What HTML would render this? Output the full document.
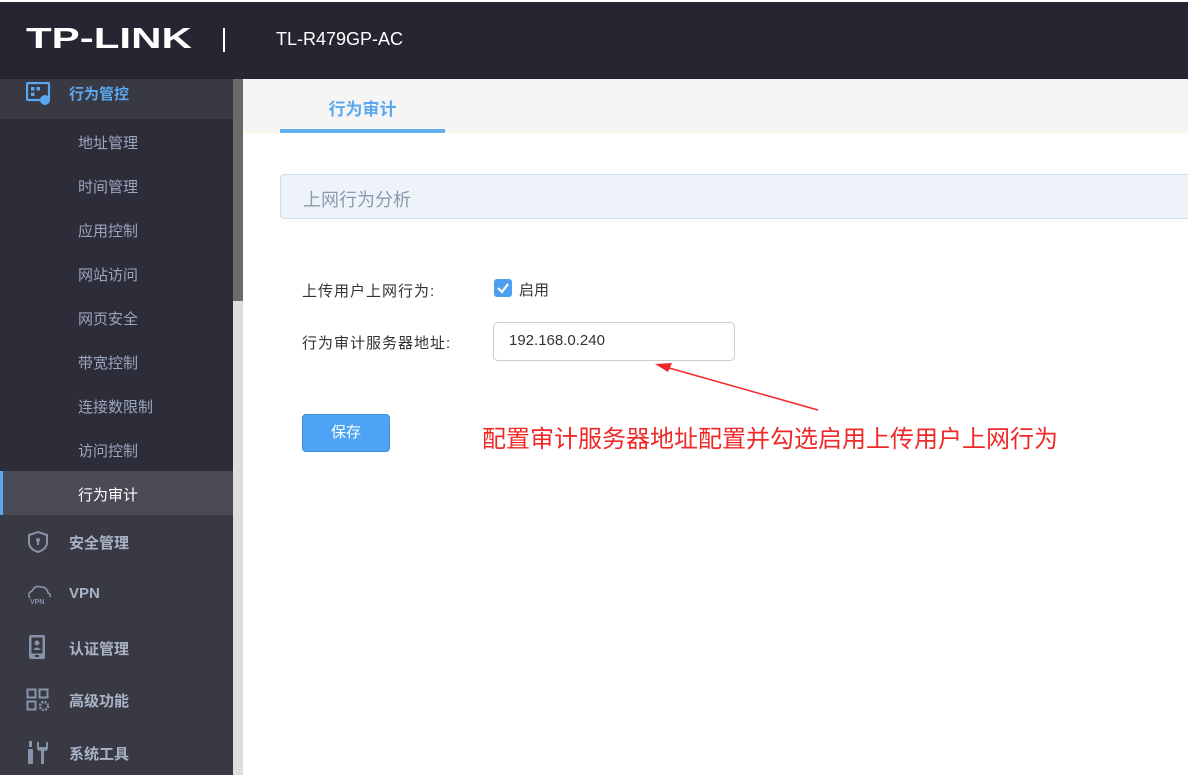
<!DOCTYPE html>
<html><head><meta charset="utf-8"><style>
*{margin:0;padding:0;box-sizing:border-box}
body{width:1188px;height:775px;overflow:hidden;background:#fff;font-family:"Liberation Sans","Noto Sans CJK SC",sans-serif;position:relative}
.hdr{position:absolute;left:0;top:2px;width:1188px;height:77px;background:#262633}
.top{position:absolute;left:0;top:0;width:1188px;height:2px;background:#fff}
.logo{position:absolute;left:26px;top:23px;color:#fff;font-weight:bold;font-size:29px;font-family:"Liberation Sans",sans-serif;transform:scaleX(1.45);transform-origin:left}
.sep{position:absolute;left:223px;top:28px;width:2px;height:24px;background:#fff}
.model{position:absolute;left:276px;top:29px;color:#fff;font-size:18px}
.side{position:absolute;left:0;top:79px;width:233px;height:696px;background:#393944}
.sub{position:absolute;left:0;top:40px;width:233px;height:396px;background:#2d2d39}
.sb{position:absolute;left:233px;top:79px;width:10px;height:696px;background:#dedede}
.thumb{position:absolute;left:233px;top:79px;width:10px;height:222px;background:#6a6a6a}
.si{position:absolute;left:78px;font-size:15px;color:#9aa6bd}
.ti{position:absolute;left:69px;font-size:15px;font-weight:bold;color:#a9b3c6}
.ic{position:absolute;left:26px}
.tabbar{position:absolute;left:243px;top:79px;width:945px;height:54px;background:#f5f5f5;border-bottom:1px solid #fafad2}
.tab{position:absolute;left:280px;top:95px;width:165px;text-align:center;color:#5aa8f0;font-weight:bold;font-size:17px}
.tabu{position:absolute;left:280px;top:129px;width:165px;height:4px;background:#62aef2}
.panel{position:absolute;left:280px;top:174px;width:920px;height:45px;background:#eef3f9;border:1px solid #cfdceb;border-radius:4px}
.panel span{position:absolute;left:22px;top:11px;font-size:18px;color:#8a9bb0}
.lbl{position:absolute;left:302px;font-size:15px;color:#333;letter-spacing:1px}
.cb{position:absolute;left:494px;top:279px;width:18px;height:18px;border-radius:3px;background:#4d9ff0}
.inp{position:absolute;left:493px;top:322px;width:242px;height:39px;border:1px solid #ccc;border-radius:5px;font-size:15px;color:#333;padding:9px 0 0 15px}
.btn{position:absolute;left:302px;top:414px;width:88px;height:38px;background:#4ea3f5;border:1px solid #3d8fdc;border-radius:4px;color:#fff;font-size:15px;text-align:center;line-height:36px}
.note{position:absolute;left:482px;top:419px;font-size:24px;color:#f02828;white-space:nowrap}
</style></head><body>
<div class="top"></div>
<div class="hdr"></div>
<div class="logo">TP-LINK</div>
<div class="sep"></div>
<div class="model">TL-R479GP-AC</div>
<div class="side"><div class="sub"></div>
<div style="position:absolute;left:0;top:392px;width:233px;height:44px;background:#4b4b57"></div>
<div style="position:absolute;left:0;top:392px;width:3px;height:44px;background:#5aa8f0"></div>
</div>
<div class="sb"></div><div class="thumb"></div>
<svg class="ic" style="top:82px" width="26" height="24" viewBox="0 0 26 24"><rect x="1" y="1" width="22" height="17" rx="1" fill="none" stroke="#5aa8f0" stroke-width="2.2"/><rect x="5" y="5" width="3.5" height="3.5" fill="#5aa8f0"/><rect x="10.5" y="5" width="3.5" height="3.5" fill="#5aa8f0"/><rect x="5" y="10.5" width="3.5" height="3.5" fill="#5aa8f0"/><circle cx="19" cy="18" r="5" fill="#5aa8f0"/></svg>
<div class="ti" style="top:83px;color:#5aa8f0">行为管控</div>
<div class="si" style="top:132px">地址管理</div>
<div class="si" style="top:176px">时间管理</div>
<div class="si" style="top:220px">应用控制</div>
<div class="si" style="top:264px">网站访问</div>
<div class="si" style="top:308px">网页安全</div>
<div class="si" style="top:352px">带宽控制</div>
<div class="si" style="top:396px">连接数限制</div>
<div class="si" style="top:440px">访问控制</div>
<div class="si" style="top:484px;color:#fff">行为审计</div>
<svg class="ic" style="top:530px" width="24" height="24" viewBox="0 0 24 24"><path d="M12 2 L21 5 V12 Q21 19 12 22 Q3 19 3 12 V5 Z" fill="none" stroke="#8793a8" stroke-width="2"/><circle cx="12" cy="10" r="2" fill="#8793a8"/><rect x="11" y="10" width="2" height="5" fill="#8793a8"/></svg>
<div class="ti" style="top:532px">安全管理</div>
<svg class="ic" style="top:584px" width="26" height="22" viewBox="0 0 26 22"><path d="M4 14 Q1 9 6 7 Q9 1 15 3 Q21 3 22 9 Q25 10 24 13" fill="none" stroke="#8793a8" stroke-width="1.6"/><text x="4" y="20" font-size="7" font-weight="bold" fill="#8793a8" font-family="Liberation Sans">VPN</text></svg>
<div class="ti" style="top:585px">VPN</div>
<svg class="ic" style="top:634px" width="24" height="26" viewBox="0 0 24 26"><rect x="3" y="1" width="16" height="24" rx="2" fill="#8793a8"/><rect x="5.5" y="3.5" width="11" height="16" fill="#393944"/><circle cx="11" cy="9" r="2.5" fill="#8793a8"/><path d="M7 16 Q11 11 15 16 Z" fill="#8793a8"/><rect x="9" y="21" width="4" height="2" fill="#393944"/></svg>
<div class="ti" style="top:638px">认证管理</div>
<svg class="ic" style="top:688px" width="26" height="24" viewBox="0 0 26 24"><rect x="1.5" y="1.5" width="8" height="8" fill="none" stroke="#8793a8" stroke-width="2"/><rect x="13.5" y="1.5" width="8" height="8" fill="none" stroke="#8793a8" stroke-width="2"/><rect x="1.5" y="13.5" width="8" height="8" fill="none" stroke="#8793a8" stroke-width="2"/><circle cx="18" cy="18" r="4" fill="none" stroke="#8793a8" stroke-width="2.5" stroke-dasharray="2 1.2"/></svg>
<div class="ti" style="top:690px">高级功能</div>
<svg class="ic" style="top:740px" width="26" height="26" viewBox="0 0 26 26"><rect x="3" y="1" width="3" height="6" fill="#8793a8"/><rect x="2" y="9" width="5" height="15" rx="1" fill="#8793a8"/><path d="M11 2 V8 Q11 11 15 11 V24 H18 V11 Q22 11 22 8 V2 H20 V7 H13 V2 Z" fill="#8793a8"/></svg>
<div class="ti" style="top:743px">系统工具</div>
<div class="tabbar"></div>
<div class="tab">行为审计</div>
<div class="tabu"></div>
<div class="panel"><span>上网行为分析</span></div>
<div class="lbl" style="top:280px">上传用户上网行为:</div>
<div class="cb"><svg width="18" height="18" viewBox="0 0 18 18"><path d="M4 9 L8 13 L14 5" fill="none" stroke="#fff" stroke-width="2.2"/></svg></div>
<div class="lbl" style="left:519px;top:279px;letter-spacing:0">启用</div>
<div class="lbl" style="top:332px">行为审计服务器地址:</div>
<div class="inp">192.168.0.240</div>
<div class="btn">保存</div>
<svg style="position:absolute;left:650px;top:358px" width="180" height="60"><line x1="168" y1="52" x2="12" y2="8" stroke="#f02828" stroke-width="1.5"/><path d="M5 6 L22 5 L18 14 Z" fill="#f02828"/></svg>
<div class="note">配置审计服务器地址配置并勾选启用上传用户上网行为</div>
</body></html>
